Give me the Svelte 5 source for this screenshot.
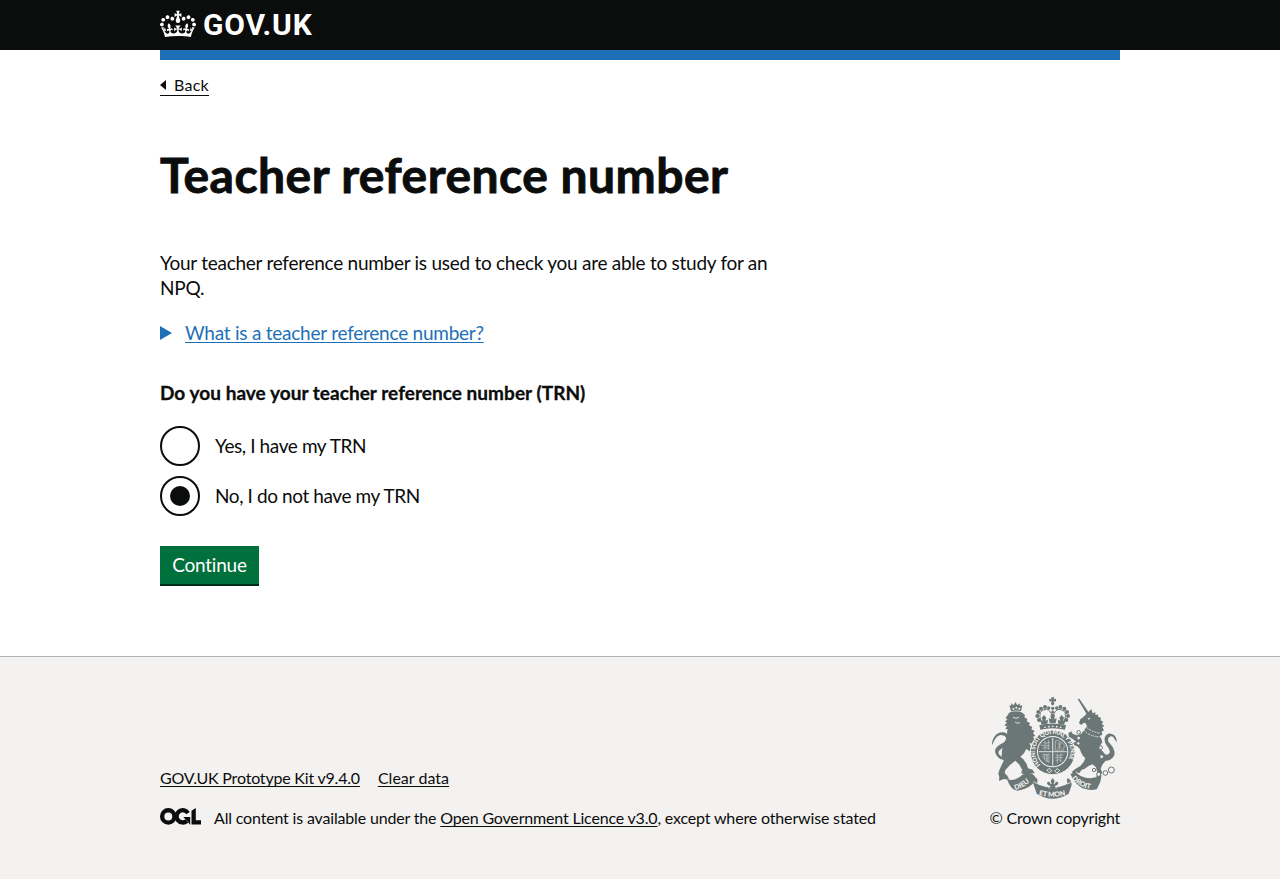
<script>
  let choice = $state('no');

  const options = [
    { value: 'yes', label: 'Yes, I have my TRN' },
    { value: 'no', label: 'No, I do not have my TRN' }
  ];

  const crownBeads = [
    [162, 90, 6], [157, 78, 6], [160, 66, 6], [168, 56, 6], [180, 51, 6], [191, 54, 5],
    [244, 90, 6], [249, 78, 6], [246, 66, 6], [238, 56, 6], [226, 51, 6], [215, 54, 5],
    [203, 55, 5], [203, 66, 4.5], [203, 76, 4.5]
  ];
  const chain = [
    [281, 127, 5.5], [281, 144, 5.5], [280, 160, 5], [347, 173, 5.5],
    [350, 200, 5.5], [327, 240, 5], [341, 253, 6], [361, 249, 7], [379, 240, 9]
  ];
</script>

<header class="header">
  <div class="header-inner">
    <a class="logo" href="#home">
      <svg class="crown" viewBox="0 0 132 97" width="36" height="30" aria-hidden="true">
        <path fill="currentColor" fill-rule="evenodd" d="M25 30.2c3.5 1.5 7.7-.2 9.1-3.7 1.5-3.6-.2-7.8-3.9-9.2-3.6-1.4-7.6.3-9.1 3.9-1.4 3.5.3 7.5 3.9 9zM9 39.5c3.6 1.5 7.8-.2 9.2-3.7 1.5-3.6-.2-7.8-3.9-9.1-3.6-1.5-7.6.2-9.1 3.8-1.4 3.5.3 7.5 3.8 9zM4.4 57.2c3.5 1.5 7.7-.2 9.1-3.8 1.5-3.6-.2-7.7-3.9-9.1-3.5-1.5-7.6.3-9.1 3.8-1.4 3.5.3 7.6 3.9 9.1zm38.3-21.4c3.5 1.5 7.7-.2 9.1-3.8 1.5-3.6-.2-7.7-3.9-9.1-3.6-1.5-7.6.3-9.1 3.8-1.3 3.6.4 7.7 3.9 9.1zm64.4-5.6c-3.6 1.5-7.8-.2-9.1-3.7-1.5-3.6.2-7.8 3.8-9.2 3.6-1.4 7.7.3 9.2 3.9 1.3 3.5-.4 7.5-3.9 9zm15.9 9.3c-3.6 1.5-7.7-.2-9.1-3.7-1.5-3.6.2-7.8 3.7-9.1 3.6-1.5 7.7.2 9.2 3.8 1.5 3.5-.3 7.5-3.8 9zm4.7 17.7c-3.6 1.5-7.8-.2-9.2-3.8-1.5-3.6.2-7.7 3.9-9.1 3.6-1.5 7.7.3 9.2 3.8 1.3 3.5-.4 7.6-3.9 9.1zM89.3 35.8c-3.6 1.5-7.8-.2-9.2-3.8-1.4-3.6.2-7.7 3.9-9.1 3.6-1.5 7.7.3 9.2 3.8 1.4 3.6-.3 7.7-3.9 9.1zM69.7 17.7l8.9 4.7V9.3l-8.9 2.8c-.2-.3-.5-.6-.9-.9L72.4 0H59.6l3.5 11.2c-.3.3-.6.5-.9.9l-8.8-2.8v13.1l8.8-4.7c.3.3.6.7.9.9l-5 15.4v.1c-.2.8-.4 1.6-.4 2.4 0 4.1 3.1 7.5 7 8.1h.2c.3 0 .7.1 1 .1.4 0 .7 0 1-.1h.2c4-.6 7.1-4.1 7.1-8.1 0-.8-.1-1.7-.4-2.4V34l-5.1-15.4c.4-.2.7-.6 1-.9zM66 92.8c16.9 0 32.8 1.1 47.1 3.2 4-16.9 8.9-26.7 14-33.5l-9.6-3.4c1 4.9 1.1 7.2 0 10.2-1.5-1.4-3-4.3-4.2-8.7L108.6 76c2.8-2 5-3.2 7.5-3.3-4.4 9.4-10 11.9-13.6 11.2-4.3-.8-6.3-4.6-5.6-7.9 1-4.7 5.7-5.9 8-.5 4.3-8.7-3-11.4-7.6-8.8 7.1-7.2 7.9-13.5 2.1-21.1-8 6.1-8.1 12.3-4.5 20.8-4.7-5.4-12.1-2.5-9.5 6.2 3.4-5.2 7.9-2 7.2 3.1-.6 4.3-6.4 7.8-13.5 7.2-10.3-.9-10.9-8-11.2-13.8 2.5-.5 7.1 1.8 11 7.3L80.2 60c-4.1 4.4-8 5.3-12.3 5.4 1.4-4.4 8-11.6 8-11.6H55.5s6.4 7.2 7.9 11.6c-4.2-.1-8-1-12.3-5.4l1.4 16.4c3.9-5.5 8.5-7.7 10.9-7.3-.3 5.8-.9 12.8-11.1 13.8-7.2.6-12.9-2.9-13.5-7.2-.7-5 3.8-8.3 7.1-3.1 2.7-8.7-4.6-11.6-9.4-6.2 3.7-8.5 3.6-14.7-4.6-20.8-5.8 7.6-5 13.9 2.2 21.1-4.7-2.6-11.9.1-7.7 8.8 2.3-5.5 7.1-4.2 8.1.5.7 3.3-1.3 7.1-5.7 7.9-3.5.7-9-1.8-13.5-11.2 2.5.1 4.7 1.3 7.5 3.3l-4.7-15.4c-1.2 4.4-2.7 7.2-4.3 8.7-1.1-3-.9-5.3 0-10.2l-9.5 3.4c5 6.9 9.9 16.7 14 33.5 14.8-2.1 30.8-3.2 47.7-3.2z" />
      </svg>
      <span class="logotype">GOV.UK</span>
    </a>
  </div>
</header>

<div class="container">
  <a class="back" href="#back"><span class="back-arrow"></span>Back</a>

  <main>
    <h1>Teacher reference number</h1>
    <p class="lead">Your teacher reference number is used to check you are able to study for an NPQ.</p>

    <a class="details" href="#details">
      <span class="details-arrow"></span><span class="details-text">What is a teacher reference number?</span>
    </a>

    <form>
      <fieldset>
        <legend>Do you have your teacher reference number (TRN)</legend>
        {#each options as option}
          <label class="radio">
            <input type="radio" name="trn" value={option.value} bind:group={choice} />
            <span>{option.label}</span>
          </label>
        {/each}
      </fieldset>
      <button type="button">Continue</button>
    </form>
  </main>
</div>

<footer>
  <div class="footer-inner">
    <div class="meta">
      <nav>
        <a class="kit" href="#kit">GOV.UK Prototype Kit v9.4.0</a>
        <a class="clear" href="#clear">Clear data</a>
      </nav>
      <div class="licence">
        <svg class="ogl" viewBox="0 0 41 17" width="41" height="17" aria-hidden="true">
          <g fill="none" stroke="currentColor" stroke-width="4.3">
            <circle cx="8.3" cy="8.4" r="6.15" />
            <path d="M28 5.1A6.15 6.15 0 1 0 26.8 13" />
          </g>
          <path fill="currentColor" d="M23.3 8.9h6.9v7.5h-.3l-1.6-1.9-2.9-3.2zM31.5 2.8 35.8 0v12.2h5.2v4.3h-9.5z" />
        </svg>
        <span><span class="s1">All content is available under the{' '}</span><a href="#ogl">Open Government Licence v3.0</a><span class="s2">, except where otherwise stated</span></span>
      </div>
    </div>

    <a class="copyright" href="#crown">
      <svg class="arms" viewBox="21 21 375 306" width="125" height="102" aria-hidden="true">
        <defs>
          <path id="garter" d="M167 224 A53 53 0 1 1 239 224" />
          <path id="dieu" d="M91 300 Q120 292 142 268" />
          <path id="etmon" d="M161 315 Q203 326 245 315" />
          <path id="droit" d="M260 266 Q285 294 322 298" />
        </defs>

        <g fill="#6b7776">
          <!-- lion -->
          <path d="M73 45l5 3 1-8 7 6 5-10 6 10 7-6 1 8 7-3-4 19q-15-5-30 0z" />
          <path d="M72 68Q92 60 112 68L120 75 118 82 127 87 125 94 135 99 132 106 142 111 139 118 149 123 144 129 151 138 143 141 152 149 163 150 159 160 148 164 134 158 136 167 149 170 159 178 152 190 138 186 124 177 117 190 106 200 115 208 125 222 129 235 143 239 149 250 134 250 120 255 107 250 112 240 103 224 91 212 75 225 61 240 59 249 67 257 73 269 56 267 42 273 43 262 40 250 44 238 50 225 56 212 50 198 51 180 56 165 62 150 67 138 66 128 68 118 61 117 66 108 58 107 66 97 60 96 67 87 61 84 67 77z" />
          <path d="M54 209q-14-2-22-18c-6-14 5-23 20-31q14-7 11-17-4-8-16-8-10 1-18 14l-8 16q-1-13 8-26 11-14 26-12c16 2 21 19 12 34-4 7-19 14-25 22q-5 9 6 16 5 4 12 2z" />
          <!-- unicorn -->
          <path d="M278 27l5-1 30 44-7 4z" />
          <path d="M319 57L323 70 331 67 331 74 340 74 339 80 349 84 346 90 355 96 350 101 358 108 352 112 357 121 350 125 352 134 344 138 348 144 352 156 346 166 349 180 358 190 365 200 362 212 352 224 347 236 352 248 341 262 345 274 337 284 329 278 334 262 336 246 333 232 322 223 312 227 298 237 289 240 284 248 268 252 260 246 272 236 286 228 296 216 301 205 294 198 288 187 284 176 276 168 266 166 262 158 274 156 264 148 252 140 250 130 258 124 264 132 276 136 288 132 298 120 306 108 302 100 296 98 289 105 282 100 286 88 296 80 304 72z" />
          <path d="M349 206q12 11 26 3 17-8 13-26-5-15-14-23-8-9-3-17 6-7 13-3l11 17q1-13-8-22-12-9-22-1c-11 9-6 25 3 36q11 15 3 22-8 5-18-2z" />
          <!-- crown -->
          <path d="M198 22h10l-2 6 7-2v9l-7-2 2 9-3 4h-4l-3-4 2-9-7 2v-9l7 2z" />
          <path d="M166 119q37-9 74 0l3-14q-40-9-80 0z" />
          <path d="M170 104l-5-15 8 3-3-9 7-8 7 8-3 9 8-3-2 12zM194 99l-3-15 8 4-3-11 7-6 7 6-3 11 8-4-3 15zM220 101l-2-12 8 3-3-9 7-8 7 8-3 9 8-3-5 15z" />
          {#each crownBeads as [x, y, r]}<circle cx={x} cy={y} {r} />{/each}
          <!-- ribbons -->
          <path d="M66 268q24 8 46-14l22-6q16 5 20 20-19 30-56 34-20 0-32-34z" />
          <path d="M155 264q-13 7-9 20l9 27q48 30 96 0l9-26q1-13-12-21l-3 7q5 6-2 13-40 17-82 0-7-6-3-13z" />
          <path d="M256 252l15-5q13 12 31 16 25 5 48-8l-4 20-10 22q-14 6-32 1-31-6-48-46z" />
        </g>
        <path d="M168 95q-12-36 16-37 14 2 17 22M238 95q12-36-16-37-14 2-17 22" fill="none" stroke="#6b7776" stroke-width="3" />

        <circle cx="203" cy="187" r="67" fill="#6b7776" stroke="#f3f2f1" stroke-width="3" />
        <circle cx="203" cy="185" r="47" fill="#f3f2f1" />
        <circle cx="203" cy="185" r="44" fill="#6b7776" />
        <g stroke="#c9cccb" fill="none">
          <path d="M203 143v84M161 185h84" stroke-width="4" />
          <g stroke-width="2">
            <path d="M175 157l8 3 12-3M170 167h25M173 175l9-3 12 5M180 152v29M190 150v29M166 161l5 5" />
            <path d="M211 153v28q13-1 25-1l2-15q-8-10-18-14zM217 158l13 17M229 158l-12 19M223 155v22" />
            <path d="M174 193q10 2 18-1v26q-14-6-18-18zM179 193v14M184 193v20M188 193v22" />
            <path d="M211 194l9 3 15-3M210 203h24M212 212l9-3 9 4M217 191v29M227 190v25" />
          </g>
        </g>
        <g stroke="#f3f2f1" stroke-width="2.5" fill="none">
          <path d="M186 240l8-5 6 8-8 5zM209 243l8-7 7 6-8 7z" />
          <path d="M146 275q9 9 24 6M260 275q-10 9-24 6" />
          <path d="M300 106q12 18 46 24M296 119q15 20 50 22" stroke-dasharray="6 3" />
          <path d="M84 82l9 3 9-3M90 96l8 4 7-3" />
          <path d="M75 257q18 6 38-9M272 245q14 12 32 15 20 3 40-6" />
        </g>
        <g fill="#f3f2f1">
          <circle cx="85" cy="56" r="3" /><circle cx="94" cy="53" r="3" /><circle cx="103" cy="56" r="3" />
          <circle cx="180" cy="112" r="2.5" /><circle cx="192" cy="110" r="2.5" /><circle cx="203" cy="109" r="2.5" /><circle cx="215" cy="110" r="2.5" /><circle cx="227" cy="112" r="2.5" />
          <path d="M308 84l9 1-6 4z" />
          <path d="M188 262h30l-3 34h-24z" />
        </g>
        <path fill="#6b7776" d="M203 264l6 9-3 8 3 2 3-7q8-3 8 4-1 7-10 8v4h4v4h-6l-2 3h-6l-2-3h-6v-4h4v-4q-9-1-10-8 0-7 8-4l3 7 3-2-3-8z" />
        <g fill="none" stroke="#6b7776" stroke-width="3">
          {#each chain as [x, y, r]}<circle cx={x} cy={y} {r} fill="#f3f2f1" />{/each}
        </g>
        <g class="motto">
          <text font-size="18" textLength="232" lengthAdjust="spacing"><textPath href="#garter">HONI SOIT QUI MAL Y PENSE</textPath></text>
          <text font-size="21"><textPath href="#dieu">DIEU</textPath></text>
          <text font-size="21"><textPath href="#etmon">ET MON</textPath></text>
          <text font-size="21"><textPath href="#droit">DROIT</textPath></text>
        </g>
      </svg>
      <span>© Crown copyright</span>
    </a>
  </div>
</footer>

<style>
  :global(body) {
    background: #f3f2f1;
    color: #0b0c0c;
    font-family: Lato, sans-serif;
  }
  :global(#app) {
    background: #fff;
  }
  a { color: inherit; }
  .header {
    background: #0b0c0c;
    color: #fff;
    height: 50px;
  }
  .header-inner {
    width: 960px;
    height: 50px;
    margin: 0 auto;
    border-bottom: 10px solid #1d70b8;
  }
  .logo {
    display: flex;
    gap: 7px;
    height: 48px;
    align-items: center;
    text-decoration: none;
  }
  .logotype {
    font: 700 30px/30px Roboto, sans-serif;
    letter-spacing: 0.8px;
    padding-top: 1px;
  }
  .container {
    width: 960px;
    margin: 0 auto;
    padding-top: 24px;
    height: 582px;
  }
  .back {
    display: flex;
    width: max-content;
    height: 21px;
    align-items: center;
    font-size: 16px;
    line-height: 21px;
    padding-bottom: 0;
    letter-spacing: 0.27px;
    border-bottom: 1px solid #0b0c0c;
    text-decoration: none;
  }
  .back-arrow {
    border: 5px solid transparent;
    border-left: 0;
    border-right: 6px solid #0b0c0c;
    margin-right: 8px;
  }
  main { padding-top: 54px; }
  h1 {
    margin: 0 0 50px;
    font-size: 48px;
    line-height: 50px;
    letter-spacing: 0.47px;
    -webkit-text-stroke: 0.9px #0b0c0c;
  }
  .lead {
    margin: 0 0 20px;
    width: 630px;
    font-size: 19px;
    line-height: 25px;
    letter-spacing: -0.265px;
  }
  .details {
    display: flex;
    align-items: center;
    height: 25px;
    margin-bottom: 35px;
    color: #1d70b8;
    text-decoration: none;
    font-size: 19px;
    line-height: 25px;
    letter-spacing: -0.24px;
  }
  .details-arrow {
    border: 7px solid transparent;
    border-right: 0;
    border-left: 12px solid #1d70b8;
    margin-right: 13px;
  }
  .details-text {
    text-decoration: underline;
    text-decoration-thickness: 1px;
    text-underline-offset: 2px;
    text-decoration-skip-ink: none;
  }
  fieldset {
    border: 0;
    margin: 0 0 30px;
    padding: 0;
    display: flex;
    flex-direction: column;
    gap: 10px;
  }
  legend {
    padding: 0;
    margin-bottom: 21px;
    font-weight: 700;
    font-size: 19px;
    line-height: 25px;
    letter-spacing: 0.04px;
    -webkit-text-stroke: 0.3px #0b0c0c;
  }
  .radio {
    display: flex;
    align-items: center;
    gap: 15px;
    height: 40px;
    font-size: 19px;
    line-height: 25px;
    letter-spacing: -0.4px;
  }
  .radio span { padding-bottom: 1px; }
  input {
    appearance: none;
    box-sizing: border-box;
    width: 40px;
    height: 40px;
    margin: 0;
    border: 2px solid #0b0c0c;
    border-radius: 50%;
    display: grid;
    place-items: center;
  }
  input:checked::after {
    content: '';
    width: 20px;
    height: 20px;
    border-radius: 50%;
    background: #0b0c0c;
  }
  button {
    display: block;
    width: 99px;
    height: 38px;
    padding: 0;
    border: 0;
    background: #00703c;
    box-shadow: 0 2px 0 #002d18;
    color: #fff;
    font: 19px/38px Lato, sans-serif;
    letter-spacing: -0.21px;
  }
  footer {
    background: #f3f2f1;
    border-top: 1px solid #b1b4b6;
    height: 222px;
    font-size: 16px;
    line-height: 20px;
  }
  footer a {
    text-underline-offset: 2px;
    text-decoration-thickness: 1px;
    text-decoration-skip-ink: none;
  }
  .footer-inner {
    width: 960px;
    margin: 0 auto;
    padding-top: 40px;
    display: flex;
    justify-content: space-between;
    align-items: flex-end;
  }
  nav {
    display: flex;
    gap: 18px;
    margin-bottom: 20px;
  }
  .kit { letter-spacing: -0.2px; }
  .clear { letter-spacing: 0.02px; }
  .licence {
    display: flex;
    gap: 13px;
    align-items: center;
  }
  .ogl { margin-bottom: 3px; }
  .licence a { letter-spacing: -0.18px; }
  .s1 { letter-spacing: -0.17px; }
  .s2 { letter-spacing: -0.16px; }
  .copyright {
    display: flex;
    flex-direction: column;
    align-items: flex-end;
    gap: 9px;
    padding-bottom: 1px;
    text-decoration: none;
    letter-spacing: -0.22px;
  }
  .meta { padding-bottom: 1px; }
  .arms { margin-right: 3px; }
  .motto text {
    fill: #f3f2f1;
    font-family: Lato, sans-serif;
    font-weight: 900;
  }
</style>
